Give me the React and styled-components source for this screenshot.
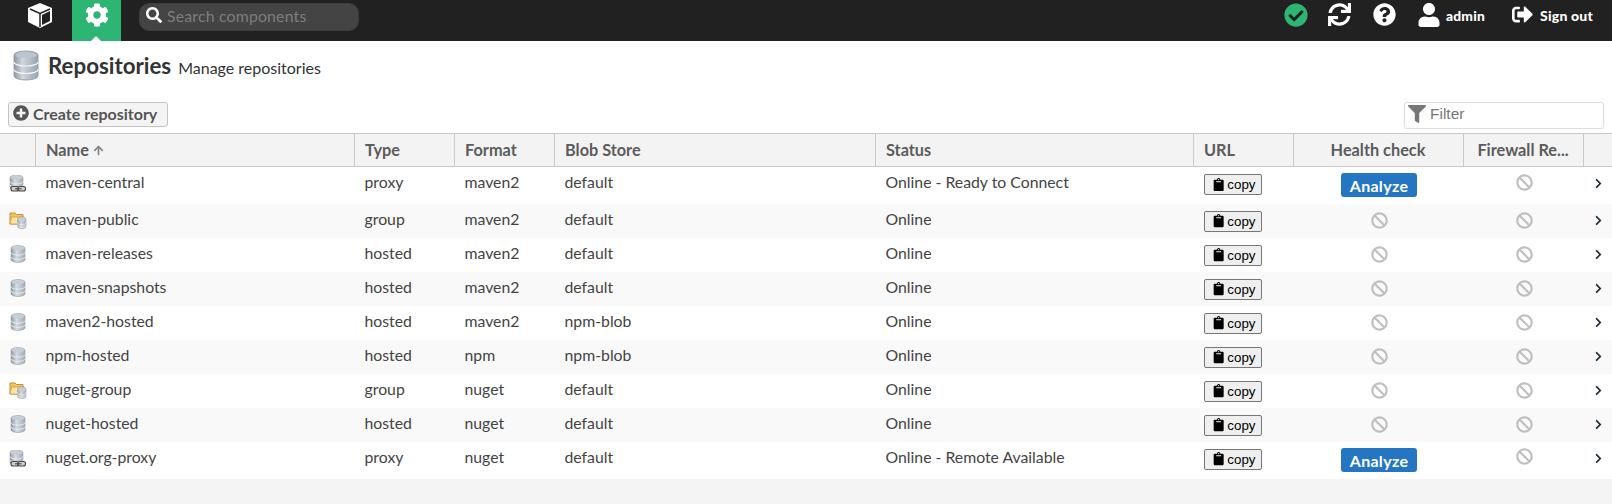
import React from 'react';
import styled, { createGlobalStyle } from 'styled-components';
import { FaCog, FaSearch, FaCheckCircle, FaSync, FaQuestionCircle, FaUser, FaPlusCircle, FaFilter, FaBan, FaChevronRight, FaClipboard, FaArrowUp, FaSignOutAlt } from 'react-icons/fa';

const Global = createGlobalStyle`
  html, body { margin: 0; padding: 0; background: #f4f4f4; }
  body { font-family: Lato, "Open Sans", sans-serif; color: #333; height: 504px; overflow: hidden; }
`;
const Shell = styled.div`display: flex; flex-direction: column; width: 1612px; height: 504px; background: #f4f4f4;`;
const Header = styled.header`display: flex; align-items: flex-start; height: 41px; background: #212121; color: #fff; flex: none;`;
const LogoCell = styled.div`width: 72px; height: 41px; display: flex; justify-content: center; padding: 2px 0 0 8px; box-sizing: border-box;`;
const AdminTab = styled.div`
  position: relative; width: 49px; height: 41px; background: #2cb573; display: flex; justify-content: center; padding-top: 3px; box-sizing: border-box; font-size: 24px;
  &::after { content: ''; position: absolute; left: 19px; bottom: 0; border: 5px solid transparent; border-top: 0; border-bottom-color: #fff; }
`;
const SearchBox = styled.div`
  margin: 3px 0 0 18px; width: 220px; height: 28px; box-sizing: border-box; border-radius: 10px; background: #444; border: 1px solid #3d3d3d;
  display: flex; align-items: center; gap: 5px; padding: 0 0 4px 6px; color: #fff; font-size: 16px;
`;
const SearchHint = styled.span`font-size: 15.8px; color: #7d7d7d; letter-spacing: .2px;`;
const HeaderRight = styled.div`margin-left: auto; display: flex; align-items: flex-start; padding: 3px 0 0; height: 38px;`;
const HeaderIcon = styled.span`display: flex; width: ${p => p.$w}px; font-size: ${p => p.$size}px; color: ${p => p.$color || '#fff'}; line-height: 1; padding-top: ${p => p.$top || 0}px;`;
const HeaderLabel = styled.span`font-size: ${p => p.$size}px; font-weight: 900; color: #fff; width: ${p => p.$w}px; padding-top: 4px; letter-spacing: .2px;`;
const Title = styled.div`display: flex; align-items: center; height: 52px; background: #fff; flex: none; padding: 0 0 4px 13px; box-sizing: border-box;`;
const H1 = styled.h1`margin: 0 7px 0 9px; font-size: 22.3px; font-weight: 700; color: #333;`;
const Sub = styled.span`font-size: 16px; color: #333; padding-top: 5px;`;
const Toolbar = styled.div`display: flex; align-items: flex-start; justify-content: space-between; height: 40px; background: #fff; flex: none; padding: 9px 0 0 8px; box-sizing: border-box;`;
const CreateBtn = styled.button`
  display: flex; align-items: center; gap: 4px; width: 160px; height: 25px; padding: 0 0 3px 4px; box-sizing: border-box; background: #f4f4f4; border: 1px solid #c4c4c4; border-radius: 3px;
  font: 700 16px Lato, sans-serif; color: #555; white-space: nowrap;
`;
const Filter = styled.div`
  display: flex; align-items: center; gap: 4px; width: 200px; height: 27px; box-sizing: border-box; margin-right: 8px; border: 1px solid #ddd; border-radius: 3px; background: #fff; padding: 0 0 4px 3px;
  color: #777; font-size: 18px;
`;
const FilterHint = styled.span`font-family: "Liberation Sans", sans-serif; font-size: 15.5px; color: #777;`;
const Table = styled.table`border-collapse: collapse; table-layout: fixed; width: 1612px; flex: none; font-size: 15.8px;`;
const Th = styled.th`
  height: 33px; padding: 0 0 2px 10.5px; box-sizing: border-box; background: #f3f3f3; border-top: 1px solid #c9c9c9; border-bottom: 1px solid #c9c9c9; border-left: 1px solid #c9c9c9;
  text-align: ${p => p.$center ? 'center' : 'left'}; font-size: 16.3px; font-weight: 700; color: #5c5c5c; white-space: nowrap; overflow: hidden;
  &:first-child { border-left: 0; }
  ${p => p.$center && 'padding-left: 0;'}
`;
const Row = styled.tr`height: ${p => p.$tall ? 37 : 34}px; background: ${p => p.$alt ? '#f9f9f9' : '#fff'};`;
const Td = styled.td`padding: 0 0 ${p => p.$tall ? 7 : 4}px 10.5px; white-space: nowrap; color: #444; font-size: 15.8px; line-height: 17px;`;
const BanTd = styled.td`padding: 0 0 ${p => p.$tall ? 9 : 2}px 2px; text-align: center; line-height: 17px;`;
const ChevronTd = styled.td`padding: 0 0 ${p => p.$tall ? 9 : 6}px 2px; text-align: center; line-height: 17px;`;
const CopyTd = styled.td`padding: 0 0 ${p => p.$tall ? 3 : 0}px 11px; white-space: nowrap;`;
const AnalyzeTd = styled.td`padding: 0 0 1px 2px;`;
const IconTd = styled.td`padding: 0 0 2px 9px; vertical-align: middle; line-height: 0;`;
const CopyBtn = styled.button`
  display: inline-flex; align-items: center; gap: 2px; width: 58px; height: 21px; box-sizing: border-box; padding: 0 0 0 7px; border: 1px solid #767676; border-radius: 2px; background: #efefef; color: #000;
  font: 13.33px "Liberation Sans", Arial, sans-serif; margin-top: 1px;
`;
const AnalyzeBtn = styled.button`
  width: 76px; height: 24px; border: 0; padding: 0; border-radius: 3px; background: #2476c3; color: #fff; font: 700 16px Lato, sans-serif; letter-spacing: .3px; margin: 1px auto 0; display: block;
`;
const Ban = styled(FaBan)`color: #bfbfbf; font-size: 17px; vertical-align: middle;`;
const Chevron = styled(FaChevronRight)`color: #222d3a; font-size: 11px; vertical-align: middle;`;
const SortArrow = styled(FaArrowUp)`color: #858585; font-size: 11px; margin-left: 4px;`;

const Cube = () => (
  <svg width="28" height="27" viewBox="0 0 28 27">
    <path d="M14 1 L26 6 V20 L14 26 L2 20 V6 Z" fill="#fff" />
    <path d="M16 13 L24 9 V19 L16 23 Z" fill="#212121" />
    <path d="M4 7 L14 11.5 L24 7" fill="none" stroke="#212121" strokeWidth="1.5" />
    <path d="M14 12 V25" stroke="#212121" strokeWidth="1.5" />
  </svg>
);
const Drum = ({ x = 0, y = 0, w = 14, h = 17, id }) => {
  const r = 2.6;
  const seg = h / 3;
  return (
    <g transform={`translate(${x} ${y})`}>
      <defs>
        <linearGradient id={id} x1="0" x2="1" y1="0" y2="0">
          <stop offset="0" stopColor="#8f99a3" />
          <stop offset=".4" stopColor="#d5dbe1" />
          <stop offset="1" stopColor="#a1abb5" />
        </linearGradient>
      </defs>
      <path d={`M0 ${r} A${w / 2} ${r} 0 0 1 ${w} ${r} V${h - r} A${w / 2} ${r} 0 0 1 0 ${h - r} Z`} fill={`url(#${id})`} stroke="#9aa3ac" strokeWidth=".6" />
      <ellipse cx={w / 2} cy={r} rx={w / 2 - .4} ry={r - .5} fill="#c7ced5" />
      <path d={`M0 ${seg + 1.4} A${w / 2} ${r} 0 0 0 ${w} ${seg + 1.4}`} fill="none" stroke="#eef1f4" strokeWidth=".8" />
      <path d={`M0 ${2 * seg} A${w / 2} ${r} 0 0 0 ${w} ${2 * seg}`} fill="none" stroke="#eef1f4" strokeWidth=".8" />
    </g>
  );
};
const Hosted = ({ id }) => <svg width="18" height="18" viewBox="0 0 18 18"><Drum x={2} y={0.5} id={id} /></svg>;
const Proxy = ({ id }) => (
  <svg width="18" height="18" viewBox="0 0 18 18">
    <Drum x={1} y={0} w={13} h={15} id={id} />
    <rect x="2" y="11.5" width="7.5" height="4.5" rx="2" fill="#cfcfcf" stroke="#444" strokeWidth="1.1" />
    <rect x="9" y="11.5" width="7.5" height="4.5" rx="2" fill="#cfcfcf" stroke="#444" strokeWidth="1.1" />
    <path d="M6 13.8 H12.5" stroke="#444" strokeWidth="1.1" />
  </svg>
);
const Group = ({ id }) => (
  <svg width="18" height="18" viewBox="0 0 18 18">
    <path d="M1 2 H6 L7.5 3.5 H14 V13 H1 Z" fill="#f2c55f" stroke="#c8902f" strokeWidth="1" />
    <path d="M2.5 6 H15 L14 13 H1 Z" fill="#fbe5a4" stroke="#d09a3c" strokeWidth=".8" />
    <Drum x={8.5} y={6} w={8.5} h={11.5} id={id} />
  </svg>
);
const PageDb = () => (
  <svg width="26" height="31" viewBox="0 0 26 31">
    <defs>
      <linearGradient id="pg" x1="0" x2="1" y1="0" y2="0">
        <stop offset="0" stopColor="#8e98a3" />
        <stop offset=".35" stopColor="#cfd6dc" />
        <stop offset="1" stopColor="#9aa4ae" />
      </linearGradient>
    </defs>
    <path d="M1 5 A12 4 0 0 1 25 5 V26 A12 4 0 0 1 1 26 Z" fill="url(#pg)" stroke="#8b939b" strokeWidth=".8" />
    <ellipse cx="13" cy="5" rx="11" ry="3" fill="#bcc5cd" />
    <path d="M1 12 A12 4 0 0 0 25 12" fill="none" stroke="#f3f5f7" strokeWidth="1.2" />
    <path d="M1 19.5 A12 4 0 0 0 25 19.5" fill="none" stroke="#f3f5f7" strokeWidth="1.2" />
  </svg>
);

const rows = [
  ['maven-central', 'proxy', 'maven2', 'default', 'Online - Ready to Connect', true],
  ['maven-public', 'group', 'maven2', 'default', 'Online'],
  ['maven-releases', 'hosted', 'maven2', 'default', 'Online'],
  ['maven-snapshots', 'hosted', 'maven2', 'default', 'Online'],
  ['maven2-hosted', 'hosted', 'maven2', 'npm-blob', 'Online'],
  ['npm-hosted', 'hosted', 'npm', 'npm-blob', 'Online'],
  ['nuget-group', 'group', 'nuget', 'default', 'Online'],
  ['nuget-hosted', 'hosted', 'nuget', 'default', 'Online'],
  ['nuget.org-proxy', 'proxy', 'nuget', 'default', 'Online - Remote Available', true],
];
const widths = [35, 319, 100, 100, 321, 318, 100, 170, 120, 29];
const TypeIcon = { proxy: Proxy, group: Group, hosted: Hosted };

export default function App() {
  return (
    <Shell>
      <Global />
      <Header>
        <LogoCell><Cube /></LogoCell>
        <AdminTab><FaCog /></AdminTab>
        <SearchBox><FaSearch /><SearchHint>Search components</SearchHint></SearchBox>
        <HeaderRight>
          <HeaderIcon $w={44} $size={24} $color="#2cb573"><FaCheckCircle /></HeaderIcon>
          <HeaderIcon $w={45} $size={23}><FaSync /></HeaderIcon>
          <HeaderIcon $w={44} $size={23}><FaQuestionCircle /></HeaderIcon>
          <HeaderIcon $w={29} $size={24}><FaUser /></HeaderIcon>
          <HeaderLabel $w={66} $size={13.8}>admin</HeaderLabel>
          <HeaderIcon $w={28} $size={21} $top={1}><FaSignOutAlt /></HeaderIcon>
          <HeaderLabel $w={72} $size={14}>Sign out</HeaderLabel>
        </HeaderRight>
      </Header>
      <Title><PageDb /><H1>Repositories</H1><Sub>Manage repositories</Sub></Title>
      <Toolbar>
        <CreateBtn><FaPlusCircle />Create repository</CreateBtn>
        <Filter><FaFilter /><FilterHint>Filter</FilterHint></Filter>
      </Toolbar>
      <Table>
        <colgroup>{widths.map((w, i) => <col key={i} width={w} />)}</colgroup>
        <thead>
          <tr>
            <Th />
            <Th>Name<SortArrow /></Th>
            <Th>Type</Th>
            <Th>Format</Th>
            <Th>Blob Store</Th>
            <Th>Status</Th>
            <Th>URL</Th>
            <Th $center>Health check</Th>
            <Th $center>Firewall Re...</Th>
            <Th />
          </tr>
        </thead>
        <tbody>
          {rows.map(([name, type, format, blob, status, tall], i) => {
            const I = TypeIcon[type];
            return (
              <Row key={name} $tall={tall} $alt={i % 2 === 1}>
                <IconTd><I id={`d${i}`} /></IconTd>
                <Td $tall={tall}>{name}</Td>
                <Td $tall={tall}>{type}</Td>
                <Td $tall={tall}>{format}</Td>
                <Td $tall={tall}>{blob}</Td>
                <Td $tall={tall}>{status}</Td>
                <CopyTd $tall={tall}><CopyBtn><FaClipboard />copy</CopyBtn></CopyTd>
                {tall
                  ? <AnalyzeTd><AnalyzeBtn>Analyze</AnalyzeBtn></AnalyzeTd>
                  : <BanTd><Ban /></BanTd>}
                <BanTd $tall={tall}><Ban /></BanTd>
                <ChevronTd $tall={tall}><Chevron /></ChevronTd>
              </Row>
            );
          })}
        </tbody>
      </Table>
    </Shell>
  );
}
